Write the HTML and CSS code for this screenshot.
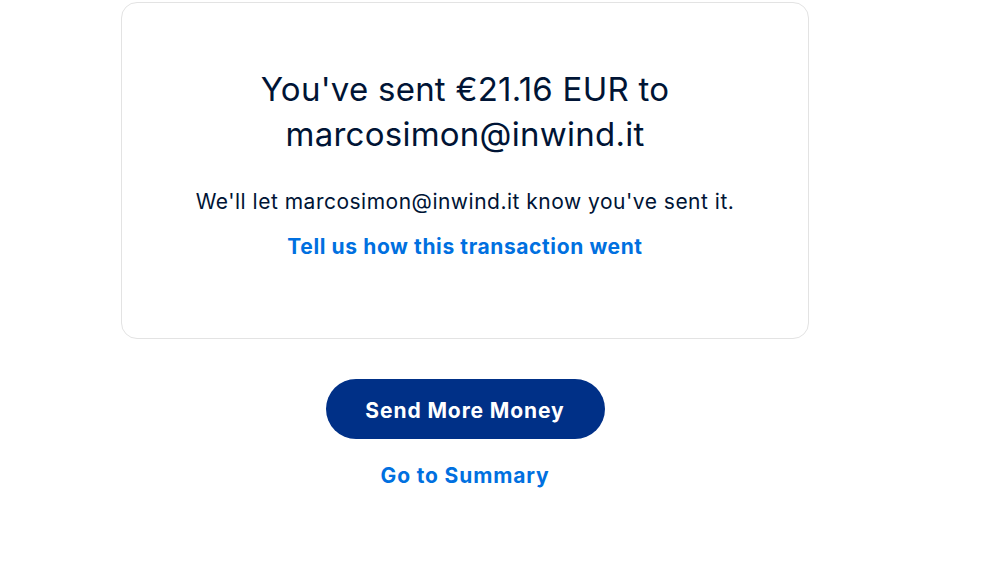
FILE: index.html
```html
<!DOCTYPE html>
<html lang="en">
<head>
<meta charset="utf-8">
<title>Payment sent</title>
<link rel="stylesheet" href="styles.css">
</head>
<body>
<main class="page">
  <section class="card">
    <h1 class="title">You've sent €21.16 EUR to marcosimon@inwind.it</h1>
    <p class="note">We'll let marcosimon@inwind.it know you've sent it.</p>
    <a class="link feedback" href="#">Tell us how this transaction went</a>
  </section>
  <div class="actions">
    <a class="btn-primary" href="#">Send More Money</a>
    <a class="link summary" href="#">Go to Summary</a>
  </div>
</main>
</body>
</html>
```
FILE: styles.css
```css
html, body {
  margin: 0;
  padding: 0;
  background: #ffffff;
}
body {
  font-family: Inter, "Liberation Sans", Arial, sans-serif;
  color: #001435;
}
.page {
  width: 688px;
  margin-left: 121px;
  padding-top: 2px;
  display: flex;
  flex-direction: column;
  align-items: center;
}
.card {
  box-sizing: border-box;
  width: 688px;
  height: 337px;
  border: 1px solid #e3e3e3;
  border-radius: 16px;
  display: flex;
  flex-direction: column;
  align-items: center;
  padding: 64px 40px 0;
}
.title {
  margin: 0;
  width: 460px;
  text-align: center;
  font-size: 33px;
  font-weight: 400;
  line-height: 45px;
  letter-spacing: 0.25px;
}
.note {
  margin: 31px 0 0;
  font-size: 21px;
  line-height: 28px;
  letter-spacing: 0.5px;
  text-align: center;
}
.link {
  color: #0070e0;
  font-weight: 700;
  font-size: 21px;
  line-height: 28px;
  text-decoration: none;
}
.feedback {
  margin-top: 17px;
  letter-spacing: 0.6px;
}
.actions {
  display: flex;
  flex-direction: column;
  align-items: center;
  margin-top: 40px;
}
.btn-primary {
  box-sizing: border-box;
  display: flex;
  align-items: center;
  justify-content: center;
  width: 279px;
  height: 60px;
  padding-top: 2px;
  border-radius: 30px;
  background: #003087;
  color: #ffffff;
  font-weight: 700;
  font-size: 21px;
  letter-spacing: 0.9px;
  text-decoration: none;
}
.summary {
  margin-top: 23px;
  letter-spacing: 0.85px;
}
```
